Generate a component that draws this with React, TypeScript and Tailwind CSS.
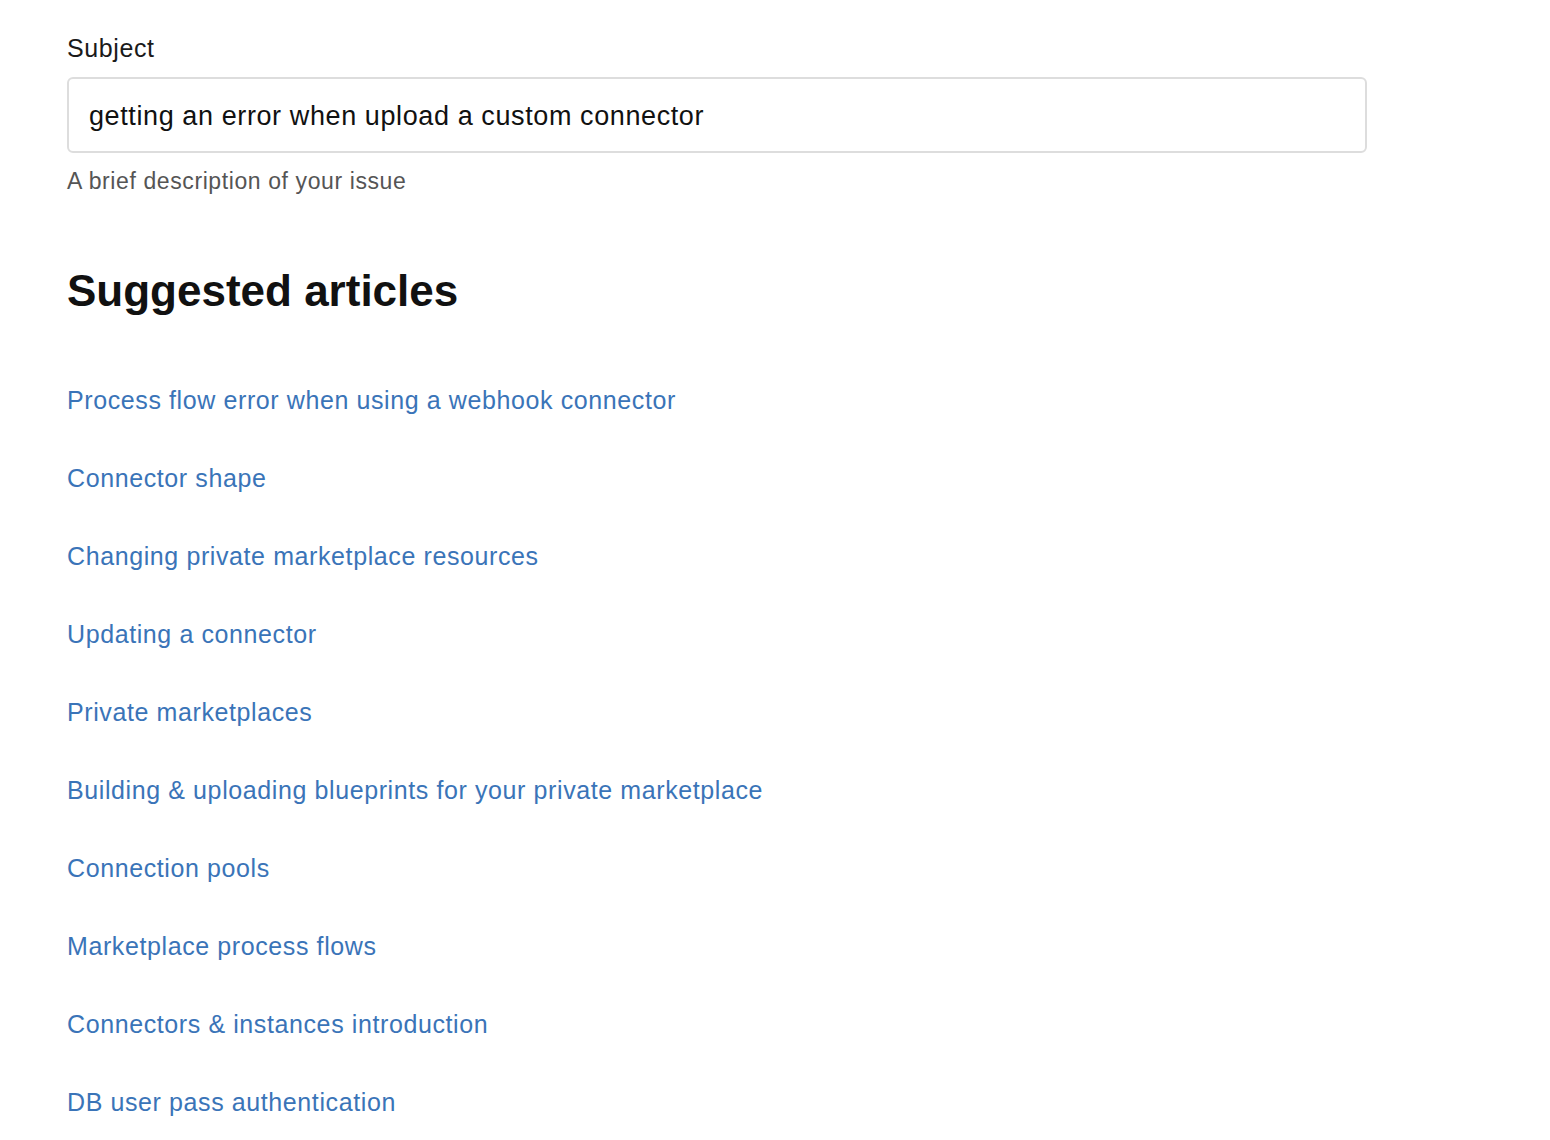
import React from 'react';

const articles: string[] = [
  'Process flow error when using a webhook connector',
  'Connector shape',
  'Changing private marketplace resources',
  'Updating a connector',
  'Private marketplaces',
  'Building & uploading blueprints for your private marketplace',
  'Connection pools',
  'Marketplace process flows',
  'Connectors & instances introduction',
  'DB user pass authentication',
];

export default function App() {
  return (
    <div className="min-h-screen bg-white pl-[67px] pt-[32px] font-['Liberation_Sans',Arial,sans-serif]">
      {/* Subject field */}
      <div className="w-[1300px]">
        <label className="block text-[25px] leading-[32px] tracking-[0.6px] text-[#1a1a1a]">Subject</label>
        <div className="mt-[13px] flex h-[76px] items-center rounded-[6px] border-2 border-[#dddddd] bg-white px-[20px] pt-[3px]">
          <span className="text-[27px] tracking-[0.6px] text-[#111111]">getting an error when upload a custom connector</span>
        </div>
        <p className="mt-[14px] text-[23px] leading-[28px] tracking-[0.6px] text-[#555555]">A brief description of your issue</p>
      </div>

      {/* Suggested articles */}
      <h2 className="mt-[68px] text-[44px] font-bold leading-[56px] text-[#111111]">Suggested articles</h2>

      <ul className="mt-[65px] flex flex-col gap-[46px]">
        {articles.map((title) => (
          <li key={title} className="text-[25px] leading-[32px] tracking-[0.6px]">
            <a href="#" className="text-[#3a74b8] hover:underline">
              {title}
            </a>
          </li>
        ))}
      </ul>
    </div>
  );
}
